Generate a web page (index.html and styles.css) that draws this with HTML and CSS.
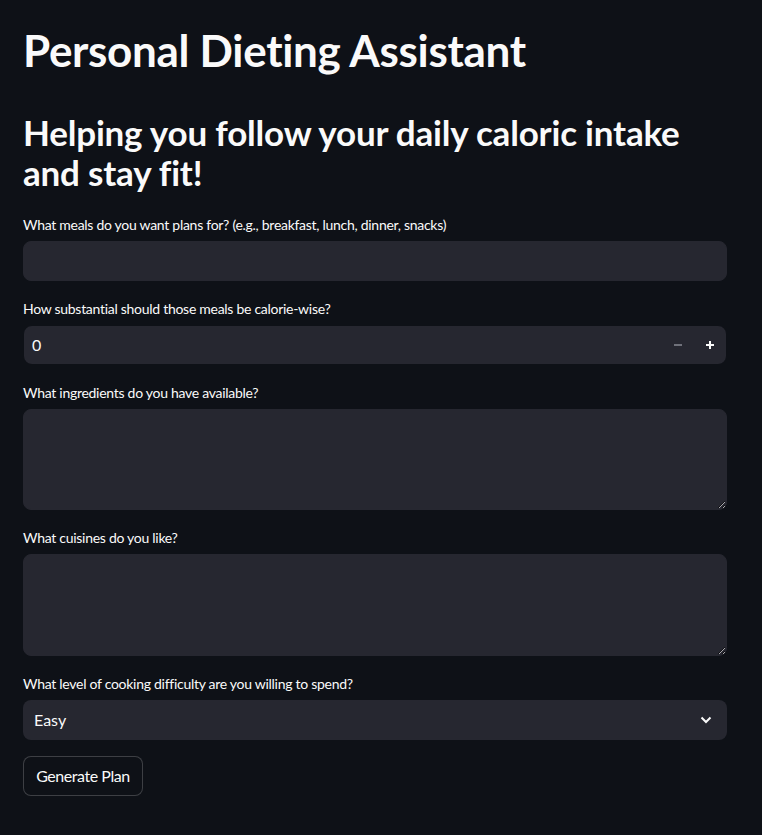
FILE: index.html
```html
<!DOCTYPE html>
<html lang="en">
<head>
<meta charset="utf-8">
<title>Personal Dieting Assistant</title>
<link rel="stylesheet" href="styles.css">
</head>
<body>
<main class="app">
  <h1 class="title">Personal Dieting Assistant</h1>
  <h2 class="subtitle">Helping you follow your daily caloric intake and stay fit!</h2>
  <div class="widgets">
    <div class="field">
      <label class="label">What meals do you want plans for? (e.g., breakfast, lunch, dinner, snacks)</label>
      <input class="text-input" type="text">
    </div>
    <div class="field">
      <label class="label">How substantial should those meals be calorie-wise?</label>
      <div class="number-input">
        <span class="number-value">0</span>
        <button class="step-btn step-disabled" type="button" aria-label="minus">
          <svg width="10" height="10" viewBox="0 0 10 10"><path d="M1 5h8" stroke="currentColor" stroke-width="2"/></svg>
        </button>
        <button class="step-btn" type="button" aria-label="plus">
          <svg width="10" height="10" viewBox="0 0 10 10"><path d="M1 5h8M5 1v8" stroke="currentColor" stroke-width="2"/></svg>
        </button>
      </div>
    </div>
    <div class="field">
      <label class="label">What ingredients do you have available?</label>
      <textarea class="text-area"></textarea>
    </div>
    <div class="field">
      <label class="label">What cuisines do you like?</label>
      <textarea class="text-area"></textarea>
    </div>
    <div class="field">
      <label class="label">What level of cooking difficulty are you willing to spend?</label>
      <div class="select">
        <span class="select-value">Easy</span>
        <svg class="chevron" width="12" height="8" viewBox="0 0 12 8"><path d="M1.5 1.5L6 6l4.5-4.5" fill="none" stroke="currentColor" stroke-width="2"/></svg>
      </div>
    </div>
    <div class="field">
      <button class="primary-btn" type="button">Generate Plan</button>
    </div>
  </div>
</main>
</body>
</html>
```
FILE: styles.css
```css
html, body {
  margin: 0;
  padding: 0;
  background: #0e1117;
  color: #fafafa;
  color-scheme: dark;
}
body {
  font-family: Lato, "Liberation Sans", sans-serif;
}
.app {
  width: 704px;
  margin-left: 23px;
  padding-top: 24px;
}
.title {
  margin: 0;
  font-size: 44px;
  line-height: 1.2;
  font-weight: 700;
  letter-spacing: -0.32px;
}
.subtitle {
  margin: 35px 0 0 0;
  font-size: 35px;
  line-height: 40px;
  font-weight: 700;
  letter-spacing: -0.2px;
}
.widgets {
  margin-top: 21px;
  display: flex;
  flex-direction: column;
  gap: 16px;
}
.field {
  display: flex;
  flex-direction: column;
}
.label {
  display: block;
  height: 24px;
  line-height: 24px;
  font-size: 14px;
  letter-spacing: -0.28px;
  margin-bottom: 4px;
}
.text-input {
  box-sizing: border-box;
  height: 40px;
  width: 100%;
  background: #262730;
  border: 1px solid #262730;
  border-radius: 8px;
  outline: none;
  color: #fafafa;
  font: 16px Lato, sans-serif;
  padding: 0 8px;
}
.number-input {
  box-sizing: border-box;
  height: 40px;
  width: 704px;
  border: 1px solid #0e1117;
  background: #262730;
  border-radius: 9px;
  display: flex;
  align-items: center;
}
.number-value {
  flex: 1;
  padding-left: 8px;
  font-size: 16px;
}
.step-btn {
  width: 32px;
  height: 38px;
  border: none;
  background: transparent;
  color: #fafafa;
  display: flex;
  align-items: center;
  justify-content: center;
  padding: 0;
}
.step-disabled {
  color: #6f717a;
}
.text-area {
  box-sizing: border-box;
  height: 101.5px;
  width: 100%;
  background: #262730;
  border: 1px solid #262730;
  border-radius: 8px;
  outline: none;
  color: #fafafa;
  font: 16px Lato, sans-serif;
  padding: 8px;
  resize: vertical;
}
.select {
  box-sizing: border-box;
  height: 40px;
  background: #262730;
  border-radius: 8px;
  display: flex;
  align-items: center;
  padding: 0 15px 0 11px;
}
.select-value {
  flex: 1;
  font-size: 16px;
}
.chevron {
  color: #fafafa;
}
.primary-btn {
  box-sizing: border-box;
  align-self: flex-start;
  width: 120px;
  height: 40px;
  background: #0e1117;
  border: 1px solid rgba(250, 250, 250, 0.2);
  border-radius: 8px;
  color: #fafafa;
  font: 16px Lato, sans-serif;
  letter-spacing: -0.45px;
  padding: 0;
}
```
